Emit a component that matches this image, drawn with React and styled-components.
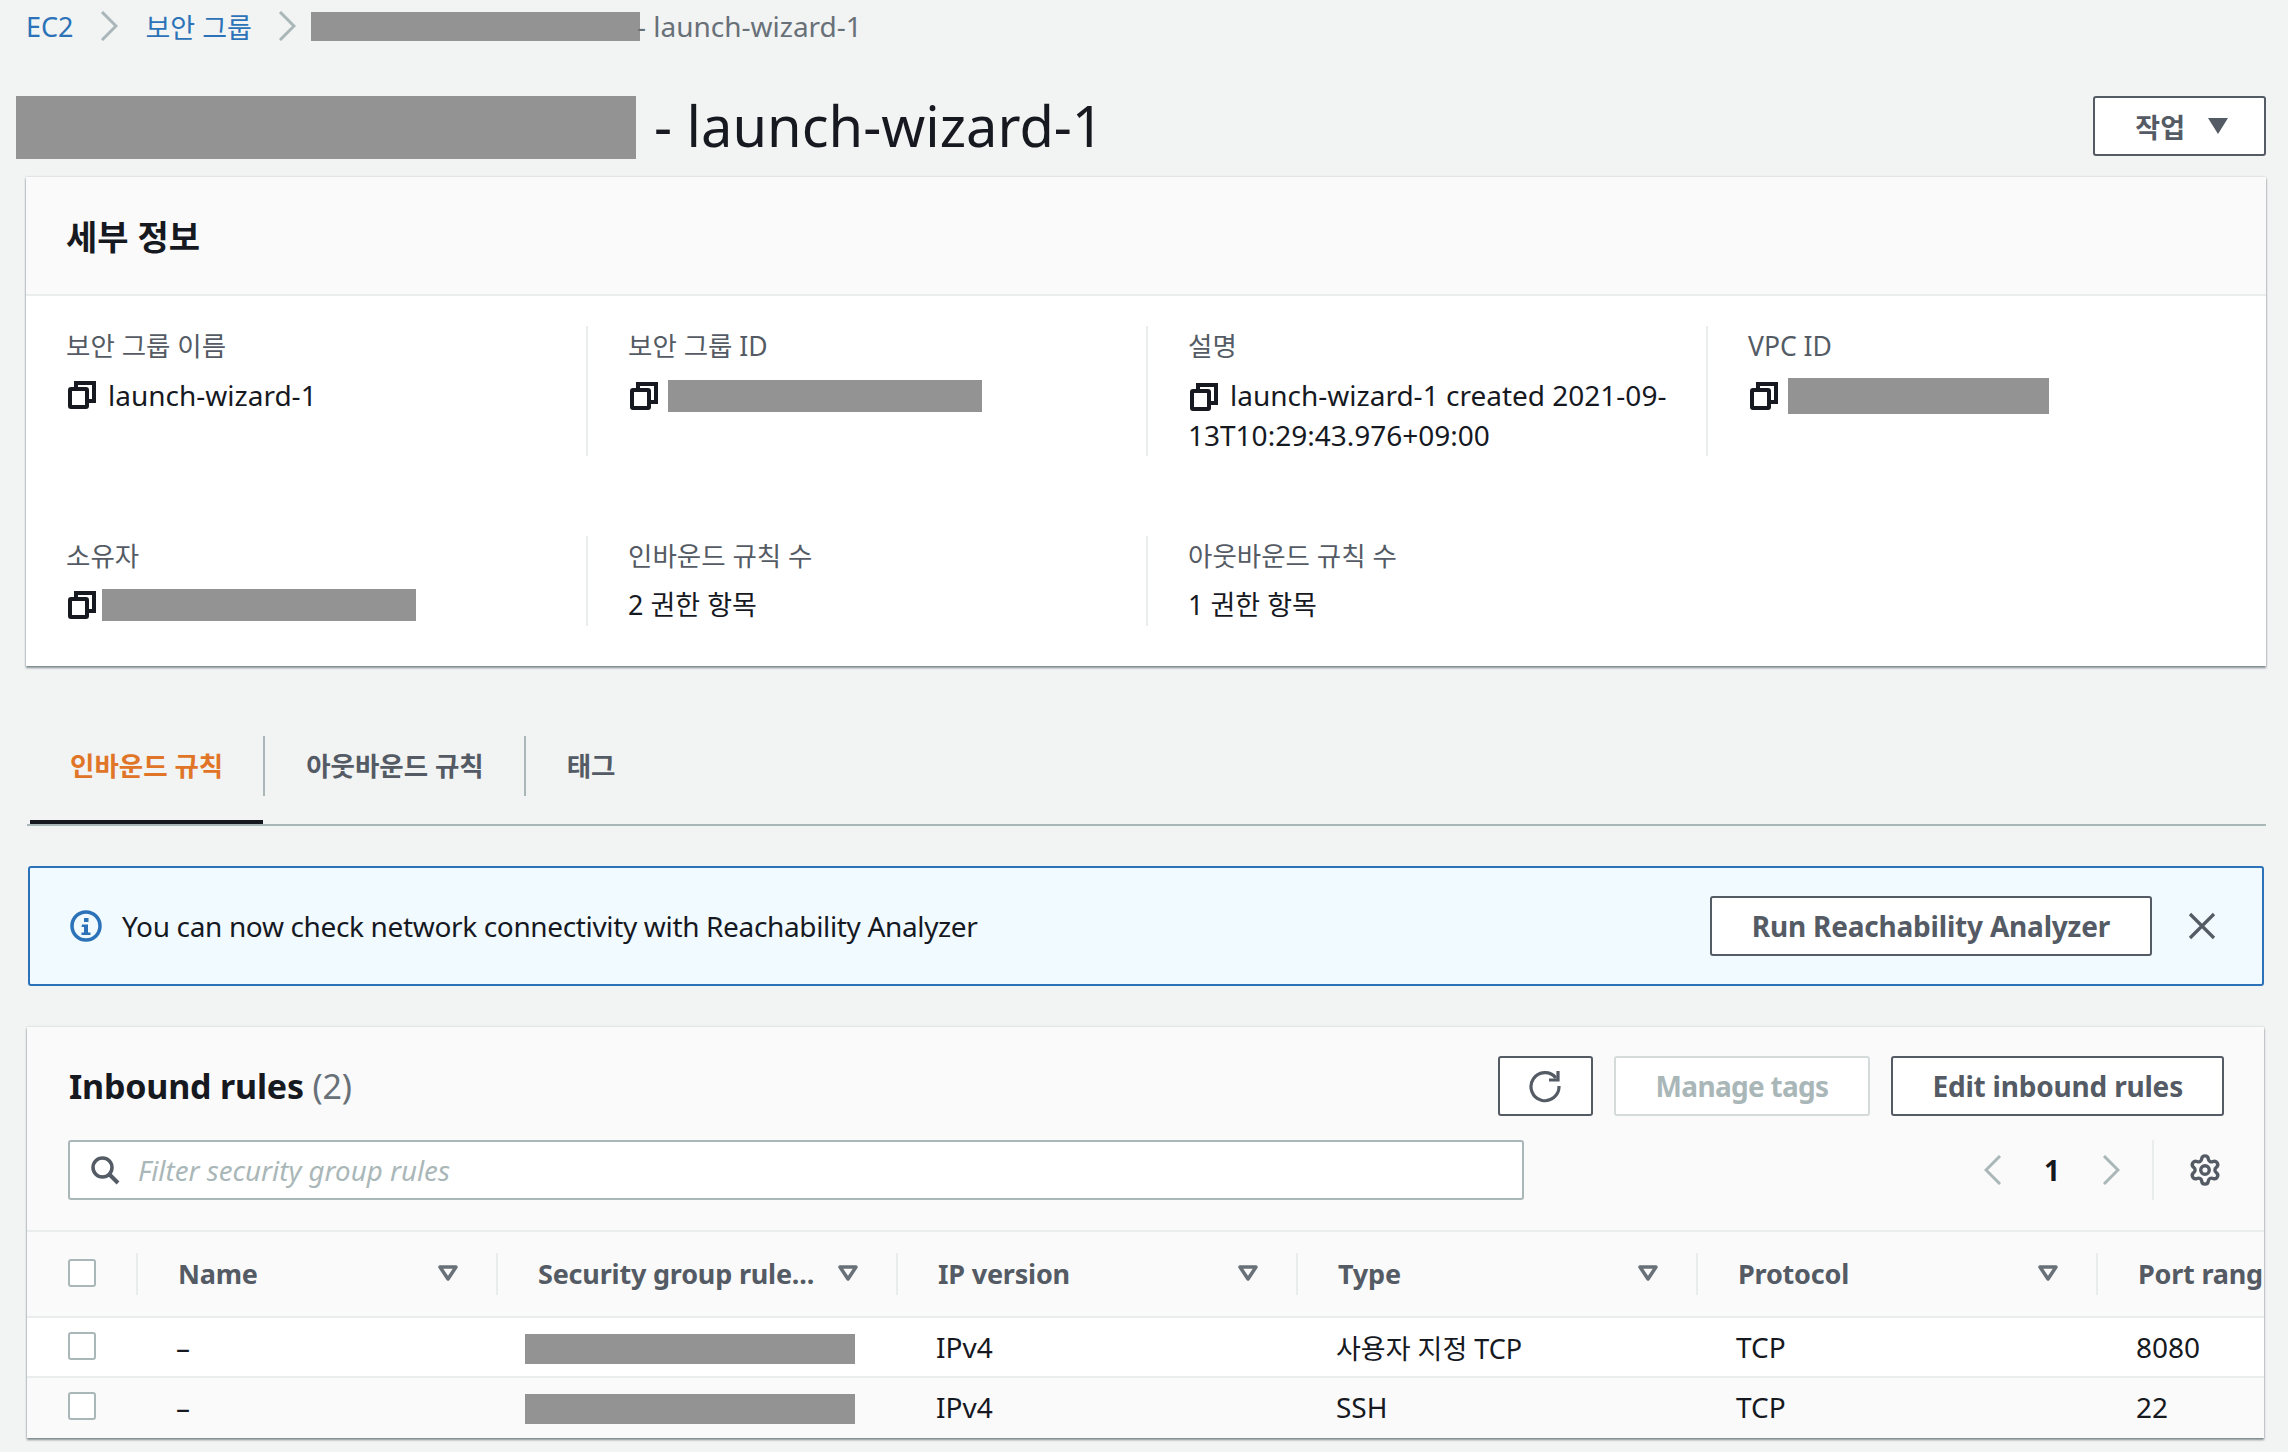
import React from "react";
import styled, { createGlobalStyle } from "styled-components";
import { Settings } from "lucide-react";

const GlobalStyle = createGlobalStyle`
    html, body {
        margin: 0;
        padding: 0;
        background: #f2f3f3;
    }
    * {
        box-sizing: border-box;
    }
    body {
        font-family: "Noto Sans", "Noto Sans CJK KR", sans-serif;
        font-size: 28px;
        color: #16191f;
    }
`;

const Page = styled.div`
    width: 2288px;
    height: 1452px;
    overflow: hidden;
    background: #f2f3f3;
`;

const Crumbs = styled.nav`
    height: 52px;
    padding-left: 26px;
    display: flex;
    align-items: center;
    font-size: 27px;
    color: #687078;
`;
const CrumbLink = styled.a`
    color: #2b72b8;
`;
const CrumbSep = styled.span`
    display: flex;
    margin: 0 ${(p) => p.$right ?? 28}px 0 26px;
`;
const CrumbCurrent = styled.span`
    margin-left: -3px;
    font-size: 28px;
    white-space: pre;
`;
const Redaction = styled.span`
    display: inline-block;
    flex: none;
    width: ${(p) => p.$w}px;
    height: ${(p) => p.$h}px;
    background: #939393;
`;

const TitleRow = styled.div`
    margin-top: 44px;
    padding: 0 22px 0 16px;
    height: 63px;
    display: flex;
    align-items: flex-start;
`;
const Title = styled.h1`
    margin: 0 0 0 18px;
    font-size: 56px;
    line-height: 58px;
    font-weight: 400;
    flex: 1;
`;
const Button = styled.button`
    height: 60px;
    padding: 0 ${(p) => p.$pad ?? 40}px;
    display: flex;
    align-items: center;
    background: #fff;
    border: 2px solid ${(p) => (p.disabled ? "#d5dbdb" : "#545b64")};
    border-radius: 3px;
    font: 700 28px "Noto Sans", "Noto Sans CJK KR", sans-serif;
    letter-spacing: ${(p) => (p.disabled ? -0.7 : -0.2)}px;
    color: ${(p) => (p.disabled ? "#aab7b8" : "#545b64")};
`;
const ActionButton = styled(Button)`
    padding: 0 36px 0 40px;
    gap: 23px;
    font-size: 27px;
    letter-spacing: 0;
`;

const Card = styled.section`
    margin: ${(p) => p.$top}px ${(p) => p.$right}px 0 ${(p) => p.$left}px;
    background: #fff;
    box-shadow: 0 2px 2px rgba(0, 28, 36, 0.45), 0 0 2px rgba(0, 28, 36, 0.2);
    overflow: hidden;
`;
const CardHeader = styled.header`
    height: 119px;
    padding-left: 40px;
    display: flex;
    align-items: center;
    background: #fafafa;
    border-bottom: 2px solid #eaeded;
`;
const CardTitle = styled.h2`
    margin: 0;
    font-size: 34px;
    font-weight: 700;
`;
const DetailGrid = styled.div`
    padding: 30px 0 40px;
    display: grid;
    grid-template-columns: repeat(4, 560px);
    row-gap: 80px;
`;
const DetailCell = styled.div`
    min-height: ${(p) => (p.$tall ? 130 : 90)}px;
    padding: 0 40px;
    border-left: ${(p) => (p.$first ? "none" : "2px solid #eaeded")};
    line-height: 40px;
`;
const Label = styled.div`
    color: #545b64;
    font-size: 26.5px;
`;
const Value = styled.div`
    margin-top: ${(p) => p.$top ?? 9}px;
    min-height: 40px;
    line-height: 40px;
    display: flex;
    align-items: center;
    gap: ${(p) => p.$gap ?? 10}px;
    font-size: ${(p) => (p.$small ? 27 : 28)}px;
    svg {
        margin-left: 2px;
    }
`;
const WrappedValue = styled.div`
    margin: 9px -12px 0 0;
    line-height: 40px;
    svg {
        vertical-align: -5px;
        margin: 0 12px 0 2px;
    }
`;

const TabBar = styled.div`
    margin: 70px 22px 0 27px;
    height: 90px;
    display: flex;
    align-items: flex-start;
    border-bottom: 2px solid #aab7b8;
`;
const Tab = styled.div`
    position: relative;
    height: 88px;
    margin-left: ${(p) => (p.$first ? 3 : 0)}px;
    padding: 9px 40px 0 ${(p) => (p.$first ? 40 : 43)}px;
    font-size: 26.5px;
    line-height: 42px;
    font-weight: 700;
    color: ${(p) => (p.$active ? "#e07528" : "#545b64")};
    border-bottom: 4px solid ${(p) => (p.$active ? "#16191f" : "transparent")};
    &::after {
        content: "";
        display: ${(p) => (p.$last ? "none" : "block")};
        position: absolute;
        right: -2px;
        top: 0;
        width: 2px;
        height: 60px;
        background: #aab7b8;
    }
`;

const Alert = styled.div`
    margin: 40px 24px 0 28px;
    height: 120px;
    padding: 0 46px 0 40px;
    display: flex;
    align-items: center;
    background: #f1faff;
    border: 2px solid #2b72b8;
    border-radius: 3px;
`;
const AlertText = styled.span`
    margin-left: 20px;
    flex: 1;
    letter-spacing: -0.35px;
`;
const CloseButton = styled.span`
    display: flex;
    margin-left: 36px;
`;

const TableHeader = styled.div`
    background: #fafafa;
    padding: 29px 40px 30px 41px;
    border-bottom: 2px solid #eaeded;
`;
const HeaderTop = styled.div`
    display: flex;
    align-items: center;
    gap: 21px;
`;
const TableTitle = styled.h2`
    margin: 0 0 0 1px;
    flex: 1;
    font-size: 34px;
    font-weight: 700;
    letter-spacing: -0.2px;
`;
const Count = styled.span`
    font-weight: 400;
    color: #687078;
`;
const FilterRow = styled.div`
    margin-top: 24px;
    display: flex;
    align-items: center;
`;
const FilterBox = styled.div`
    width: 1456px;
    height: 60px;
    padding-left: 20px;
    display: flex;
    align-items: center;
    gap: 18px;
    background: #fff;
    border: 2px solid #aab7b8;
    border-radius: 3px;
    font-style: italic;
    font-size: 27.7px;
    color: #aab7b8;
`;
const Pager = styled.div`
    margin-left: auto;
    height: 60px;
    display: flex;
    align-items: center;
    font-weight: 700;
    color: #16191f;
`;
const PageNumber = styled.span`
    width: 60px;
    margin: 0 20px;
    text-align: center;
`;
const Preferences = styled.span`
    height: 60px;
    margin-left: 32px;
    padding: 0 2px 0 34px;
    display: flex;
    align-items: center;
    border-left: 2px solid #eaeded;
`;

const Row = styled.div`
    display: grid;
    grid-template-columns: 109px 360px repeat(5, 400px);
    align-items: center;
    height: ${(p) => p.$h}px;
    background: ${(p) => (p.$white ? "#fff" : "#fafafa")};
    border-bottom: 2px solid ${(p) => (p.$last ? "transparent" : "#eaeded")};
`;
const HeadCell = styled.div`
    height: 42px;
    padding: 0 38px 2px 40px;
    display: flex;
    align-items: center;
    justify-content: space-between;
    border-left: 2px solid #eaeded;
    font-weight: 700;
    font-size: 27px;
    letter-spacing: -0.2px;
    color: #545b64;
    white-space: nowrap;
`;
const CheckCell = styled.div`
    padding: 0 0 3px 41px;
    display: flex;
    align-items: center;
`;
const Check = styled.span`
    width: 28px;
    height: 28px;
    background: #fff;
    border: 2px solid #aab7b8;
    border-radius: 3px;
`;
const Cell = styled.div`
    padding-left: 40px;
    white-space: nowrap;
    font-size: ${(p) => (p.$small ? 27 : 28)}px;
`;
const IdCell = styled.div`
    padding: 4px 0 0 29px;
    display: flex;
`;

function CopyIcon() {
    return (
        <svg width="28" height="28" viewBox="0 0 28 28" fill="none" stroke="#16191f" strokeWidth="4">
            <rect x="2" y="8" width="17" height="18" rx="1" />
            <path d="M8 7V2h18v18h-6" />
        </svg>
    );
}

function Chevron({ dir = "right", w = 18, h = 30, color = "#aab7b8" }) {
    const d = dir === "right" ? `M2 1 L${w - 2} ${h / 2} L2 ${h - 1}` : `M${w - 2} 1 L2 ${h / 2} L${w - 2} ${h - 1}`;
    return (
        <svg width={w} height={h} viewBox={`0 0 ${w} ${h}`} fill="none" stroke={color} strokeWidth="3">
            <path d={d} />
        </svg>
    );
}

function FilterTriangle() {
    return (
        <svg width="20" height="16" viewBox="0 0 20 16" fill="none" stroke="#687078" strokeWidth="3.5" strokeLinejoin="round">
            <path d="M2 2h16l-8 12z" />
        </svg>
    );
}

function InfoIcon() {
    return (
        <svg width="32" height="32" viewBox="0 0 32 32" fill="none">
            <circle cx="16" cy="16" r="14" stroke="#2b72b8" strokeWidth="3.5" />
            <rect x="14" y="8" width="4.5" height="4" fill="#2b72b8" />
            <path d="M12 14.5h6v8h2.5v2.5h-9v-2.5h2.5v-5.5h-2.5z" fill="#2b72b8" />
        </svg>
    );
}

function RefreshIcon() {
    return (
        <svg width="34" height="34" viewBox="0 0 34 34" fill="none" stroke="#545b64" strokeWidth="3.2">
            <path d="M28 9A14 14 0 1 0 31 17" />
            <path d="M30 2v9h-9" />
        </svg>
    );
}

function SearchIcon() {
    return (
        <svg width="30" height="30" viewBox="0 0 30 30" fill="none" stroke="#545b64">
            <circle cx="12.5" cy="12.5" r="9.5" strokeWidth="3.5" />
            <path d="M19 19l9 9" strokeWidth="4" />
        </svg>
    );
}

function CloseIcon() {
    return (
        <svg width="28" height="28" viewBox="0 0 28 28" fill="none" stroke="#545b64" strokeWidth="3.2">
            <path d="M2 2l24 24M26 2L2 26" />
        </svg>
    );
}

const columns = ["Name", "Security group rule...", "IP version", "Type", "Protocol", "Port range"];

const rules = [
    { type: "사용자 지정 TCP", korean: true, protocol: "TCP", port: "8080" },
    { type: "SSH", protocol: "TCP", port: "22" },
];

function App() {
    return (
        <Page>
            <GlobalStyle />
            <Crumbs>
                <CrumbLink>EC2</CrumbLink>
                <CrumbSep>
                    <Chevron />
                </CrumbSep>
                <CrumbLink>보안 그룹</CrumbLink>
                <CrumbSep $right={15}>
                    <Chevron />
                </CrumbSep>
                <Redaction $w={329} $h={29} />
                <CrumbCurrent>- launch-wizard-1</CrumbCurrent>
            </Crumbs>

            <TitleRow>
                <Redaction $w={620} $h={63} />
                <Title>- launch-wizard-1</Title>
                <ActionButton>
                    작업
                    <svg width="20" height="16" viewBox="0 0 20 16" fill="#545b64">
                        <path d="M0 0h20L10 16z" />
                    </svg>
                </ActionButton>
            </TitleRow>

            <Card $top={18} $left={26} $right={22}>
                <CardHeader>
                    <CardTitle>세부 정보</CardTitle>
                </CardHeader>
                <DetailGrid>
                    <DetailCell $first $tall>
                        <Label>보안 그룹 이름</Label>
                        <Value $gap={12}>
                            <CopyIcon />
                            launch-wizard-1
                        </Value>
                    </DetailCell>
                    <DetailCell $tall>
                        <Label>보안 그룹 ID</Label>
                        <Value $top={10}>
                            <CopyIcon />
                            <Redaction $w={314} $h={32} />
                        </Value>
                    </DetailCell>
                    <DetailCell $tall>
                        <Label>설명</Label>
                        <WrappedValue>
                            <CopyIcon />
                            launch-wizard-1 created 2021-09-13T10:29:43.976+09:00
                        </WrappedValue>
                    </DetailCell>
                    <DetailCell $tall>
                        <Label>VPC ID</Label>
                        <Value $top={10}>
                            <CopyIcon />
                            <Redaction $w={261} $h={36} />
                        </Value>
                    </DetailCell>
                    <DetailCell $first>
                        <Label>소유자</Label>
                        <Value $gap={6}>
                            <CopyIcon />
                            <Redaction $w={314} $h={32} />
                        </Value>
                    </DetailCell>
                    <DetailCell>
                        <Label>인바운드 규칙 수</Label>
                        <Value $small>2 권한 항목</Value>
                    </DetailCell>
                    <DetailCell>
                        <Label>아웃바운드 규칙 수</Label>
                        <Value $small>1 권한 항목</Value>
                    </DetailCell>
                </DetailGrid>
            </Card>

            <TabBar>
                <Tab $first $active>
                    인바운드 규칙
                </Tab>
                <Tab>아웃바운드 규칙</Tab>
                <Tab $last>태그</Tab>
            </TabBar>

            <Alert>
                <InfoIcon />
                <AlertText>You can now check network connectivity with Reachability Analyzer</AlertText>
                <Button>Run Reachability Analyzer</Button>
                <CloseButton>
                    <CloseIcon />
                </CloseButton>
            </Alert>

            <Card $top={41} $left={27} $right={24}>
                <TableHeader>
                    <HeaderTop>
                        <TableTitle>
                            Inbound rules <Count>(2)</Count>
                        </TableTitle>
                        <Button $pad={28.5}>
                            <RefreshIcon />
                        </Button>
                        <Button disabled>Manage tags</Button>
                        <Button $pad={39}>Edit inbound rules</Button>
                    </HeaderTop>
                    <FilterRow>
                        <FilterBox>
                            <SearchIcon />
                            Filter security group rules
                        </FilterBox>
                        <Pager>
                            <Chevron dir="left" />
                            <PageNumber>1</PageNumber>
                            <Chevron />
                            <Preferences>
                                <Settings size={34} color="#545b64" strokeWidth={2.4} />
                            </Preferences>
                        </Pager>
                    </FilterRow>
                </TableHeader>
                <Row $h={86}>
                    <CheckCell>
                        <Check />
                    </CheckCell>
                    {columns.map((c, i) => (
                        <HeadCell key={c}>
                            {c}
                            {i < 5 && <FilterTriangle />}
                        </HeadCell>
                    ))}
                </Row>
                {rules.map((r, i) => (
                    <Row key={r.port} $h={60} $white={i === 0} $last={i === 1}>
                        <CheckCell>
                            <Check />
                        </CheckCell>
                        <Cell>–</Cell>
                        <IdCell>
                            <Redaction $w={330} $h={30} />
                        </IdCell>
                        <Cell>IPv4</Cell>
                        <Cell $small={r.korean}>{r.type}</Cell>
                        <Cell>{r.protocol}</Cell>
                        <Cell>{r.port}</Cell>
                    </Row>
                ))}
            </Card>
        </Page>
    );
}

export default App;
